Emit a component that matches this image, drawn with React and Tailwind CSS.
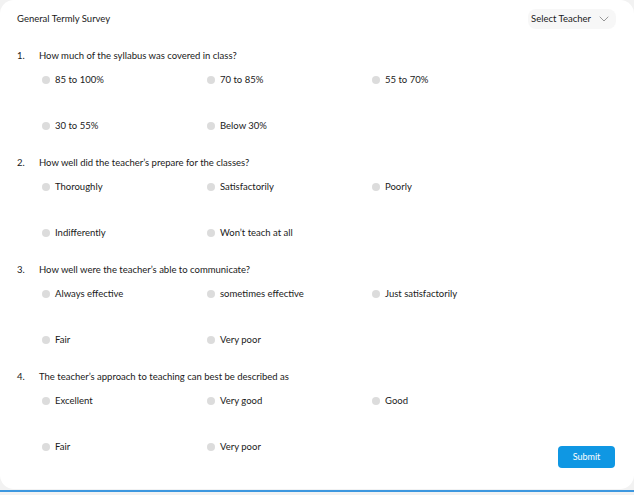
import { ChevronDown } from 'lucide-react';

const questions = [
  {
    n: '1.',
    text: 'How much of the syllabus was covered in class?',
    options: ['85 to 100%', '70 to 85%', '55 to 70%', '30 to 55%', 'Below 30%'],
  },
  {
    n: '2.',
    text: 'How well did the teacher’s prepare for the classes?',
    options: ['Thoroughly', 'Satisfactorily', 'Poorly', 'Indifferently', 'Won’t teach at all'],
  },
  {
    n: '3.',
    text: 'How well were the teacher’s able to communicate?',
    options: ['Always effective', 'sometimes effective', 'Just satisfactorily', 'Fair', 'Very poor'],
  },
  {
    n: '4.',
    text: 'The teacher’s approach to teaching can best be described as',
    options: ['Excellent', 'Very good', 'Good', 'Fair', 'Very poor'],
  },
];

const Option = ({ label }) => (
  <label className="flex items-center h-[12px] cursor-pointer">
    <span className="w-[8px] h-[8px] rounded-full bg-[#dcdcdc] mr-[5px] shrink-0" />
    <span>{label}</span>
  </label>
);

const Question = ({ q }) => (
  <div>
    <div className="flex items-center h-[12px]">
      <span className="w-[22px]">{q.n}</span>
      <span>{q.text}</span>
    </div>
    <div className="grid grid-cols-[165px_165px_165px] gap-y-[34px] pl-[25px] mt-[12px]">
      {q.options.map((o) => (
        <Option key={o} label={o} />
      ))}
    </div>
  </div>
);

export default function App() {
  return (
    <div className="w-[634px] h-[495px] bg-[#f2f2f2] font-['Lato',sans-serif] text-[9.5px] text-[#1a1a1a] overflow-hidden">
      <div className="h-[489px] bg-white rounded-[14px] flex flex-col pl-[17px] pr-[18px] pt-[9px]">
        <div className="flex items-center justify-between h-[20px]">
          <span>General Termly Survey</span>
          <button className="flex items-center h-[20px] pl-[3px] pr-[4px] rounded-lg bg-[#f7f7f7] text-[#1a1a1a]">
            <span>Select Teacher</span>
            <ChevronDown size={16} strokeWidth={1} className="ml-[5px] text-[#666]" />
          </button>
        </div>
        <div className="flex items-end mt-[21px]">
          <div className="flex-1 flex flex-col gap-y-[25px]">
            {questions.map((q) => (
              <Question key={q.n} q={q} />
            ))}
          </div>
          <button className="w-[57px] h-[22px] mr-[1px] rounded-[4px] bg-[#0f97e3] text-white text-[9px] mb-[-15px]">
            Submit
          </button>
        </div>
      </div>
      <div className="h-[2px] bg-[#3d97df] mt-[1px]" />
    </div>
  );
}
